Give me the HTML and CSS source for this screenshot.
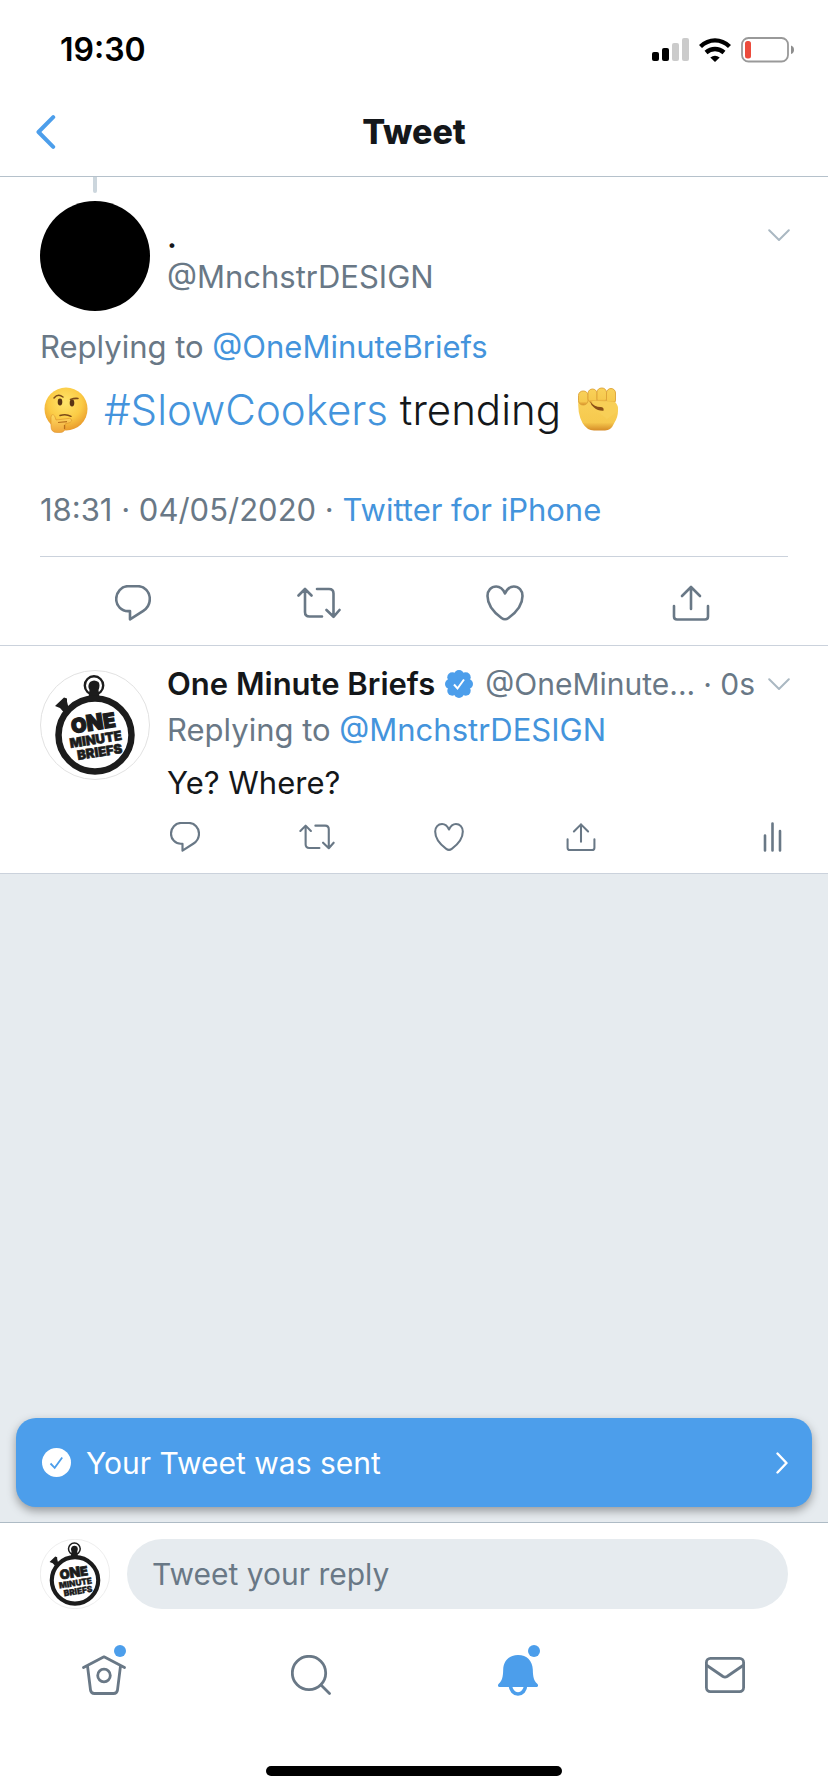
FILE: index.html
```html
<!DOCTYPE html>
<html lang="en">
<head>
<meta charset="utf-8">
<meta name="viewport" content="width=device-width, initial-scale=1">
<title>Tweet</title>
<link rel="stylesheet" href="styles.css">
</head>
<body>
<svg class="sprite" aria-hidden="true">
  <symbol id="reply" viewBox="0 0 36 36"><path d="M13 1.200h10C29.500 1.200 34.800 7 34.800 14c0 5-2.600 9.200-6.500 11.800L15 34.300v-8.200h-2C6.500 26.100 1.200 20.800 1.200 14S6.500 1.200 13 1.200z"/></symbol>
  <symbol id="retweet" viewBox="0 0 44 32"><path d="M1.500 8.500L8 2l6.500 6.500M8 2.500V25q0 4.500 4.500 4.500H25M20 2h12q4.500 0 4.500 4.500v23M29.500 23l7 6.800 6-6.800"/></symbol>
  <symbol id="heart" viewBox="0 0 38 36"><path d="M19 8.500C17 4 13.800 1.500 10.200 1.500 5.200 1.500 1.500 5.500 1.500 11 1.500 21 10 29 15.500 33q3.500 2.500 7 0C28 29 36.500 21 36.500 11c0-5.500-3.700-9.500-8.700-9.500C24.200 1.500 21 4 19 8.500z"/></symbol>
  <symbol id="share" viewBox="0 0 38 36"><path d="M10 11l9-9 9 9M19 2v22M2 21v10.500q0 3 3 3h28q3 0 3-3V21"/></symbol>
  <symbol id="caret" viewBox="0 0 22 12"><path d="M1.200 1.200L11 11l9.800-9.800"/></symbol>
</svg>

<header class="top">
  <div class="status">
    <time class="clock">19:30</time>
    <div class="status-icons">
      <svg width="37" height="24" viewBox="0 0 37 24" aria-label="Signal"><rect y="14" width="7" height="9" rx="2"/><rect x="10" y="10" width="7" height="13" rx="2"/><g fill="#cbcbcb"><rect x="20" y="5" width="7" height="18" rx="2"/><rect x="30" width="7" height="23" rx="2"/></g></svg>
      <svg width="32" height="24" viewBox="0 0 32 24" aria-label="Wi-Fi"><g fill="none" stroke="#000" stroke-width="4.400"><path d="M1.500 8.500Q8 2.400 16 2.400T30.500 8.500"/><path d="M7 14.500Q11 11 16 11T25 14.500"/></g><path d="M11.300 19.500q4.700-3.500 9.400 0L16 24z"/></svg>
      <svg width="53" height="26" viewBox="0 0 53 26" aria-label="Battery"><rect x="1" y="1" width="46" height="23.500" rx="6.500" fill="none" stroke="#999" stroke-width="1.800"/><rect x="4" y="4" width="6" height="17.500" rx="2.500" fill="#ec4b3c"/><path d="M50 8.500q3 1 3 4.300t-3 4.300z" fill="#8e8e8e"/></svg>
    </div>
  </div>
  <nav class="navbar">
    <button class="back" aria-label="Back"><svg width="20" height="34" viewBox="0 0 20 34"><path d="M17.200 2.200L2.500 17l14.700 14.800"/></svg></button>
    <h1 class="title">Tweet</h1>
  </nav>
</header>

<main class="feed">
  <article class="tweet">
    <div class="thread-line"></div>
    <div class="author">
      <div class="avatar avatar-black"></div>
      <div class="names"><strong class="name">.</strong><span class="muted">@MnchstrDESIGN</span></div>
      <button class="more" aria-label="More"><svg class="caret"><use href="#caret"/></svg></button>
    </div>
    <p class="replying">Replying to <a href="#">@OneMinuteBriefs</a></p>
    <p class="body-large">
      <svg class="emoji" viewBox="0 0 52 52" role="img" aria-label="thinking face">
        <defs>
          <radialGradient id="face" cx=".48" cy=".35" r=".65"><stop offset="0" stop-color="#ffe56b"/><stop offset=".6" stop-color="#fbcb45"/><stop offset="1" stop-color="#e99a2c"/></radialGradient>
          <linearGradient id="skin" x2="0" y2="1"><stop offset="0" stop-color="#ffdc62"/><stop offset="1" stop-color="#f0a63a"/></linearGradient>
        </defs>
        <circle cx="26" cy="25" r="21.500" fill="url(#face)"/>
        <ellipse cx="20" cy="18" rx="2.300" ry="3.400" fill="#593414"/><ellipse cx="32" cy="19" rx="2.300" ry="3.400" fill="#593414"/>
        <g fill="none" stroke="#7b4a18" stroke-width="1.500" stroke-linecap="round"><path d="M14 14q4-5 9-1M30.500 15.500q4-1.500 7.500-1M20 31.500q6-2 11 .8"/></g>
        <path d="M13 30.500q-2 0-2 3v9q0 6 6 6h3q5 0 5-5v-3.500l5-1.500q3-1.500 1-3.500-1-1-3-.5l-12 1.500q-1-5-3-5.500z" fill="url(#skin)" stroke="#dc9128" stroke-width=".6"/>
        <path d="M18 38.500l9-.8M24.500 41v4" fill="none" stroke="#b8701c" stroke-width="1.200"/>
      </svg>
      <span><a href="#">#SlowCookers</a> trending</span>
      <svg class="emoji" viewBox="0 0 52 52" role="img" aria-label="raised fist">
        <defs><linearGradient id="fist" x2="0" y2="1"><stop offset="0" stop-color="#f9d159"/><stop offset=".75" stop-color="#f6c94e"/><stop offset="1" stop-color="#d68c27"/></linearGradient></defs>
        <path d="M5.500 14q-1.500 15 4 25Q14 46.500 21 46.500h11q6 0 9-7 4-6 4-13 0-5-4-8z" fill="url(#fist)"/>
        <g fill="url(#fist)" stroke="#dda137" stroke-width=".9"><rect x="5.500" y="7" width="9.500" height="14" rx="4.500"/><rect x="15" y="5" width="9" height="14" rx="4.500"/><rect x="24" y="4" width="9.500" height="15" rx="4.500"/><rect x="33.500" y="4.500" width="9" height="16" rx="4.500"/></g>
        <path d="M18 17.500q3-1 8-.5 8 0 16 1 3.500 3 3 9l-11 8-10-8q4 1 6.500-.5.500-4-3-4.500-6 0-9.500-4.500z" fill="#f8cf57"/>
        <path d="M17 17.500q1 4 4 6 4 3.500 9.500 3.200.8-3.400-3-3.600-6 0-10.500-5.600z" fill="#8a4f17"/>
      </svg>
    </p>
    <p class="meta">18:31 · 04/05/2020 · <a href="#">Twitter for iPhone</a></p>
    <div class="actions">
      <button aria-label="Reply"><svg class="icon" width="36" height="36"><use href="#reply"/></svg></button>
      <button aria-label="Retweet"><svg class="icon" width="44" height="32"><use href="#retweet"/></svg></button>
      <button aria-label="Like"><svg class="icon" width="38" height="36"><use href="#heart"/></svg></button>
      <button aria-label="Share"><svg class="icon" width="38" height="36"><use href="#share"/></svg></button>
    </div>
  </article>

  <article class="response">
    <svg class="avatar" viewBox="0 0 110 110" role="img" aria-label="One Minute Briefs">
      <g id="stopwatch">
        <circle cx="55" cy="55" r="54.500" fill="#fff" stroke="#e2e2e2"/>
        <circle cx="54" cy="15.500" r="9.200" fill="none" stroke="#1c1c1c" stroke-width="2.400"/>
        <path d="M50 12q4-3 8.500 0 2 3 0 8l1 7H48.500l1-7q-2.500-4 .5-8z" fill="#1c1c1c"/>
        <path d="M15 36l9-8.500 3 1v3l1.500 6-5 4.500-3.500-4z" fill="#1c1c1c"/>
        <circle cx="55" cy="65" r="36.500" fill="#fff" stroke="#1c1c1c" stroke-width="6.500"/>
        <g class="logo-text" transform="rotate(-9 55 65)">
          <text x="55" y="60" font-size="20" stroke-width="1.200">O<tspan font-size="22">N</tspan>E</text>
          <text x="55" y="74" font-size="13" stroke-width=".6">MINUTE</text>
          <text x="57" y="87" font-size="13" stroke-width=".6">BRIEFS</text>
        </g>
      </g>
    </svg>
    <div class="content">
      <div class="byline">
        <strong class="name">One Minute Briefs</strong>
        <svg class="verified" viewBox="0 0 28 28" aria-label="Verified"><g fill="#4c9eeb"><circle cx="14" cy="14" r="11"/><circle cx="14" cy="5" r="5"/><circle cx="14" cy="23" r="5"/><circle cx="5" cy="14" r="5"/><circle cx="23" cy="14" r="5"/><circle cx="7.300" cy="7.300" r="5"/><circle cx="20.700" cy="7.300" r="5"/><circle cx="7.300" cy="20.700" r="5"/><circle cx="20.700" cy="20.700" r="5"/></g><path d="M9 14.500l3.500 4 6.500-9" fill="none" stroke="#fff" stroke-width="2"/></svg>
        <span class="muted">@OneMinute...</span>
        <span class="muted age">· 0s</span>
        <button class="more" aria-label="More"><svg class="caret"><use href="#caret"/></svg></button>
      </div>
      <p class="line">Replying to <a href="#">@MnchstrDESIGN</a></p>
      <p class="line dark">Ye? Where?</p>
      <div class="small-actions">
        <button aria-label="Reply"><svg class="icon" width="30" height="30"><use href="#reply"/></svg></button>
        <button aria-label="Retweet"><svg class="icon" width="36" height="26"><use href="#retweet"/></svg></button>
        <button aria-label="Like"><svg class="icon" width="30" height="30"><use href="#heart"/></svg></button>
        <button aria-label="Share"><svg class="icon" width="30" height="30"><use href="#share"/></svg></button>
        <button class="stats" aria-label="Tweet activity"><svg class="icon" width="19" height="30" viewBox="0 0 19 30"><path d="M2 13.500v15M9.500 1.500v27M17 9v19.500"/></svg></button>
      </div>
    </div>
  </article>

  <button class="toast">
    <svg width="29" height="29" viewBox="0 0 29 29"><circle cx="14.500" cy="14.500" r="14.500" fill="#fff"/><path d="M8.500 15.500l4.200 4.300L20.200 9.500" fill="none" stroke="#4c9eeb" stroke-width="1.800"/></svg>
    <span>Your Tweet was sent</span>
    <svg class="chevron" width="12" height="22" viewBox="0 0 12 22"><path d="M1.500 1.500L10.500 11l-9 9.500"/></svg>
  </button>
</main>

<footer class="bottom">
  <form class="composer">
    <svg class="avatar-small" viewBox="0 0 110 110" role="img" aria-label="One Minute Briefs"><use href="#stopwatch"/></svg>
    <input type="text" class="reply-input" placeholder="Tweet your reply" aria-label="Tweet your reply">
  </form>
  <nav class="tabs">
    <a href="#" class="tab" aria-label="Home"><svg width="44" height="40" viewBox="0 0 44 40"><path d="M1.500 12.500L22 1.800l20.500 10.700M5.500 11l3 24q.5 3.500 4 3.500h19q3.500 0 4-3.500l3-24"/><circle cx="22" cy="20.500" r="6.300"/></svg><span class="dot"></span></a>
    <a href="#" class="tab" aria-label="Search"><svg width="40" height="40" viewBox="0 0 40 40"><circle cx="18" cy="18" r="16.700"/><path d="M30 30l8.500 8.500"/></svg></a>
    <a href="#" class="tab" aria-label="Notifications"><svg width="40" height="41" viewBox="0 0 40 41"><path d="M12.500 30.500a7.500 8.500 0 0 0 15 0" stroke-width="3.600" stroke="#4c9eeb"/><path d="M20 0C11 0 5.500 6 5.200 14.500 5 23 4 25.500 1 28.500-1 30.500 0 32 2 32h36c2 0 3-1.500 1-3.500-3-3-4-5.500-4.200-14C34.500 6 29 0 20 0z" fill="#4c9eeb" stroke="none"/></svg><span class="dot"></span></a>
    <a href="#" class="tab" aria-label="Messages"><svg width="40" height="36" viewBox="0 0 40 36"><rect x="1.400" y="1.400" width="37.200" height="33.200" rx="4"/><path d="M2 8.500l16 11q2 1.200 4 0l16-11"/></svg></a>
  </nav>
  <div class="home-indicator"></div>
</footer>
</body>
</html>
```
FILE: styles.css
```css
* { box-sizing: border-box; }

body {
  margin: 0;
  min-height: 100vh;
  display: flex;
  flex-direction: column;
  background: #fff;
  color: #14171a;
  font-family: Inter, "Liberation Sans", sans-serif;
  font-size: 31px;
  line-height: 40px;
}

p, h1 { margin: 0; }
a { color: #4494dc; text-decoration: none; }
svg { display: block; flex: none; }
button {
  display: flex;
  align-items: center;
  padding: 0;
  border: 0;
  background: none;
  color: inherit;
  font: inherit;
}

.sprite { position: absolute; width: 0; height: 0; }
.muted { color: #697886; }

/* Status bar and title */
.top { border-bottom: 1px solid #b5c1cb; }
.status {
  display: flex;
  align-items: center;
  justify-content: space-between;
  height: 88px;
  padding: 12px 34px 0 60px;
}
.clock { color: #000; font-size: 32px; font-weight: 600; }
.status-icons { display: flex; align-items: center; gap: 10px; }
.navbar {
  display: grid;
  grid-template-columns: 60px 1fr 60px;
  align-items: center;
  height: 88px;
}
.back { padding-left: 36px; }
.back path {
  fill: none;
  stroke: #4c9eeb;
  stroke-width: 4;
  stroke-linecap: round;
  stroke-linejoin: round;
}
.title { text-align: center; font-size: 34px; font-weight: 800; }

/* Feed */
.feed {
  position: relative;
  flex: 1;
  background: #e6ebef;
}
.tweet, .response { background: #fff; border-bottom: 1px solid #cbd2dc; }
.avatar { width: 110px; height: 110px; flex: none; }
.avatar-black { border-radius: 50%; background: #000; }
.logo-text {
  fill: #1c1c1c;
  stroke: #1c1c1c;
  font-weight: 900;
  text-anchor: middle;
}
.name { font-weight: 600; }
.caret {
  width: 22px;
  height: 12px;
  fill: none;
  stroke: #aab8c2;
  stroke-width: 2;
  stroke-linecap: round;
}

.tweet { padding: 0 40px; }
.thread-line {
  width: 4px;
  height: 16px;
  margin-left: 53px;
  border-radius: 0 0 2px 2px;
  background: #ccd6dd;
}
.author { display: flex; gap: 17px; margin-top: 8px; }
.names { display: flex; flex-direction: column; flex: 1; padding-top: 16px; }
.author .more { align-self: flex-start; padding-top: 28px; margin-right: -2px; }
.replying, .meta { color: #697886; }
.replying { margin-top: 16px; }
.body-large {
  display: flex;
  align-items: center;
  gap: 12px;
  margin-top: 13px;
  font-size: 42px;
  font-weight: 300;
  line-height: 60px;
}
.emoji { width: 52px; height: 52px; }
.meta { padding: 50px 0 26px; border-bottom: 1px solid #cbd2dc; }
.actions {
  display: grid;
  grid-template-columns: repeat(4, 1fr);
  height: 88px;
  margin-right: 4px;
  padding-top: 3px;
}
.actions button { justify-content: center; }
.icon {
  fill: none;
  stroke: #697886;
  stroke-width: 2.6;
  stroke-linecap: round;
  stroke-linejoin: round;
}

.response { display: flex; gap: 17px; padding: 24px 38px 21px 40px; }
.content { flex: 1; min-width: 0; margin-top: -6px; }
.byline { display: flex; align-items: center; }
.byline .muted { font-size: 30px; }
.byline .more { margin-left: auto; }
.verified { width: 28px; height: 28px; margin: 0 12px 0 10px; }
.byline .age { margin-left: 8px; }
.line { margin-top: 6px; color: #697886; }
.line.dark { margin-top: 13px; color: #14171a; }
.small-actions {
  display: grid;
  grid-template-columns: repeat(4, 132px) 1fr;
  align-items: center;
  margin-top: 19px;
}
.small-actions button { justify-content: center; width: 36px; }
.small-actions .stats { justify-self: end; }

.toast {
  position: absolute;
  right: 16px;
  bottom: 15px;
  left: 16px;
  height: 89px;
  padding: 0 24px 0 26px;
  gap: 15px;
  border-radius: 20px;
  background: #4c9eeb;
  box-shadow: 0 4px 10px rgba(0, 0, 0, 0.35);
  color: #fff;
  font-size: 30px;
}
.chevron {
  margin-left: auto;
  fill: none;
  stroke: #fff;
  stroke-width: 2.4;
  stroke-linecap: round;
  stroke-linejoin: round;
}

/* Composer and tabs */
.bottom { border-top: 1px solid #aebbc5; }
.composer { display: flex; gap: 17px; padding: 16px 40px 0; }
.avatar-small { width: 70px; height: 70px; }
.reply-input {
  flex: 1;
  min-width: 0;
  height: 70px;
  padding: 0 25px;
  border: 0;
  border-radius: 35px;
  background: #e6ebef;
  color: #14171a;
  font: inherit;
  font-size: 30px;
}
.reply-input::placeholder { color: #697886; opacity: 1; }
.tabs {
  display: grid;
  grid-template-columns: repeat(4, 1fr);
  height: 132px;
}
.tab {
  position: relative;
  display: flex;
  align-items: center;
  justify-content: center;
}
.tab svg {
  fill: none;
  stroke: #697886;
  stroke-width: 2.8;
  stroke-linecap: round;
  stroke-linejoin: round;
}
.dot {
  position: absolute;
  top: 36px;
  left: calc(50% + 10px);
  width: 12px;
  height: 12px;
  border-radius: 50%;
  background: #4c9eeb;
}
.home-indicator {
  width: 296px;
  height: 10px;
  margin: 25px auto 16px;
  border-radius: 5px;
  background: #000;
}
```
